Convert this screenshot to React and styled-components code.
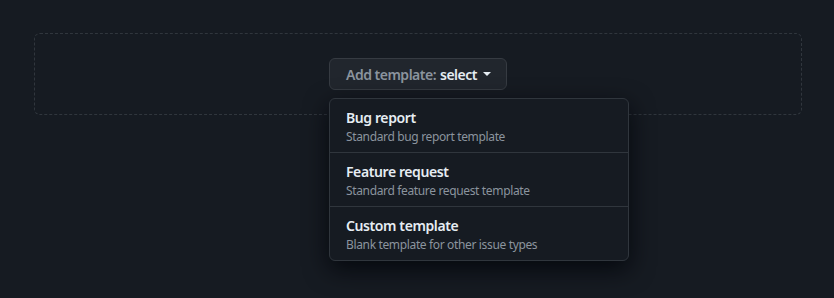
import styled, { createGlobalStyle } from "styled-components";

const Global = createGlobalStyle`
  html, body {
    margin: 0;
    background: #161b22;
    font-family: "Segoe UI", "Noto Sans", "Liberation Sans", sans-serif;
    color: #e6edf3;
  }
`;

const Page = styled.div`
  padding: 33px 32px 0 34px;
  height: 298px;
  box-sizing: border-box;
`;

const DropZone = styled.div`
  border: 1px dashed #30363d;
  border-radius: 6px;
  height: 82px;
  box-sizing: border-box;
  display: flex;
  align-items: center;
  justify-content: center;
`;

const Anchor = styled.div`
  position: relative;
`;

const Btn_select = styled.button`
  display: flex;
  align-items: center;
  gap: 4px;
  height: 32px;
  padding: 0 15px 0 16px;
  border: 1px solid #363b42;
  border-radius: 6px;
  background: #21262d;
  font-family: inherit;
  font-size: 14px;
  font-weight: 600;
  letter-spacing: -0.5px;
  color: #8b949e;
  cursor: pointer;
  span {
    color: #e6edf3;
  }
`;

const Caret = styled.i`
  width: 0;
  height: 0;
  border-left: 4px solid transparent;
  border-right: 4px solid transparent;
  border-top: 4px solid #e6edf3;
  margin-left: 2px;
`;

const Menu = styled.div`
  position: absolute;
  top: 40px;
  left: 0;
  width: 300px;
  box-sizing: border-box;
  background: #161b22;
  border: 1px solid #30363d;
  border-radius: 6px;
  box-shadow: 0 8px 24px rgba(1, 4, 9, 0.8);
  overflow: hidden;
`;

const Item = styled.div`
  height: ${(p) => (p.first ? "53px" : "54px")};
  box-sizing: border-box;
  padding: 9px 16px 0;
  border-top: ${(p) => (p.first ? "0" : "1px solid #30363d")};
  display: flex;
  flex-direction: column;
  gap: 1px;
`;

const Title = styled.div`
  font-size: 14px;
  font-weight: 600;
  letter-spacing: -0.4px;
  color: #e6edf3;
  line-height: 19px;
`;

const Desc = styled.div`
  font-size: 12px;
  letter-spacing: -0.35px;
  color: #8b949e;
  line-height: 18px;
`;

const templates = [
  { name: "Bug report", about: "Standard bug report template" },
  { name: "Feature request", about: "Standard feature request template" },
  { name: "Custom template", about: "Blank template for other issue types" },
];

export default function App() {
  return (
    <Page>
      <Global />
      <DropZone>
        <Anchor>
          <Btn_select>
            Add template: <span>select</span>
            <Caret />
          </Btn_select>
          <Menu>
            {templates.map((t, idx) => (
              <Item key={t.name} first={idx === 0}>
                <Title>{t.name}</Title>
                <Desc>{t.about}</Desc>
              </Item>
            ))}
          </Menu>
        </Anchor>
      </DropZone>
    </Page>
  );
}
